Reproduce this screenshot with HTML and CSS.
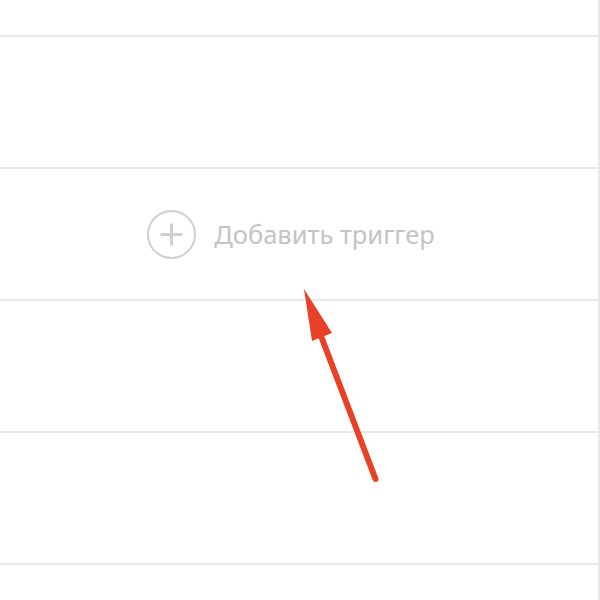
FILE: index.html
```html
<!DOCTYPE html>
<html lang="ru">
<head>
    <meta charset="UTF-8">
    <meta name="viewport" content="width=device-width, initial-scale=1.0">
    <title>Триггеры</title>
    <link rel="stylesheet" href="styles.css">
</head>
<body>
    <div class="board">
        <div class="row"></div>
        <div class="row"></div>
        <div class="row add-row">
            <button class="add-trigger">
                <svg class="plus-icon" width="49" height="49" viewBox="0 0 49 49">
                    <circle cx="24.5" cy="24.5" r="23.5" fill="none" stroke="#cfcfcf" stroke-width="2"/>
                    <path d="M13.5 24.5h22M24.5 13.5v22" stroke="#cfcfcf" stroke-width="3" fill="none"/>
                </svg>
                <span class="add-label">Добавить триггер</span>
            </button>
        </div>
        <div class="row"></div>
        <div class="row"></div>
        <div class="row"></div>
    </div>

    <!-- Стрелка-подсказка -->
    <svg class="hint-arrow" width="600" height="600" viewBox="0 0 600 600">
        <line x1="375.5" y1="479" x2="321" y2="336" stroke="#e94128" stroke-width="6" stroke-linecap="round"/>
        <polygon points="304,289 312,341 332,333" fill="#e94128"/>
    </svg>
</body>
</html>
```

FILE: styles.css
```css
/* Общие стили */
body {
    margin: 0;
    background-color: #fff;
    font-family: 'Noto Sans', 'Open Sans', sans-serif;
    overflow: hidden;
}

/* Таблица строк */
.board {
    width: 598px;
    margin-top: -95px;
    border-right: 2px solid #e8e8e8;
}

.row {
    height: 130px;
    border-bottom: 2px solid #e8e8e8;
}

.add-row {
    display: flex;
    justify-content: center;
    align-items: center;
    padding-right: 16px;
}

/* Кнопка добавления */
.add-trigger {
    display: flex;
    align-items: center;
    gap: 18px;
    padding: 0;
    border: none;
    background: none;
    cursor: pointer;
}

.plus-icon {
    display: block;
}

.add-label {
    font-family: 'Noto Sans', 'Open Sans', sans-serif;
    font-size: 25.5px;
    color: #c4c4c4;
}

/* Стрелка */
.hint-arrow {
    position: absolute;
    left: 0;
    top: 0;
    pointer-events: none;
}
```
